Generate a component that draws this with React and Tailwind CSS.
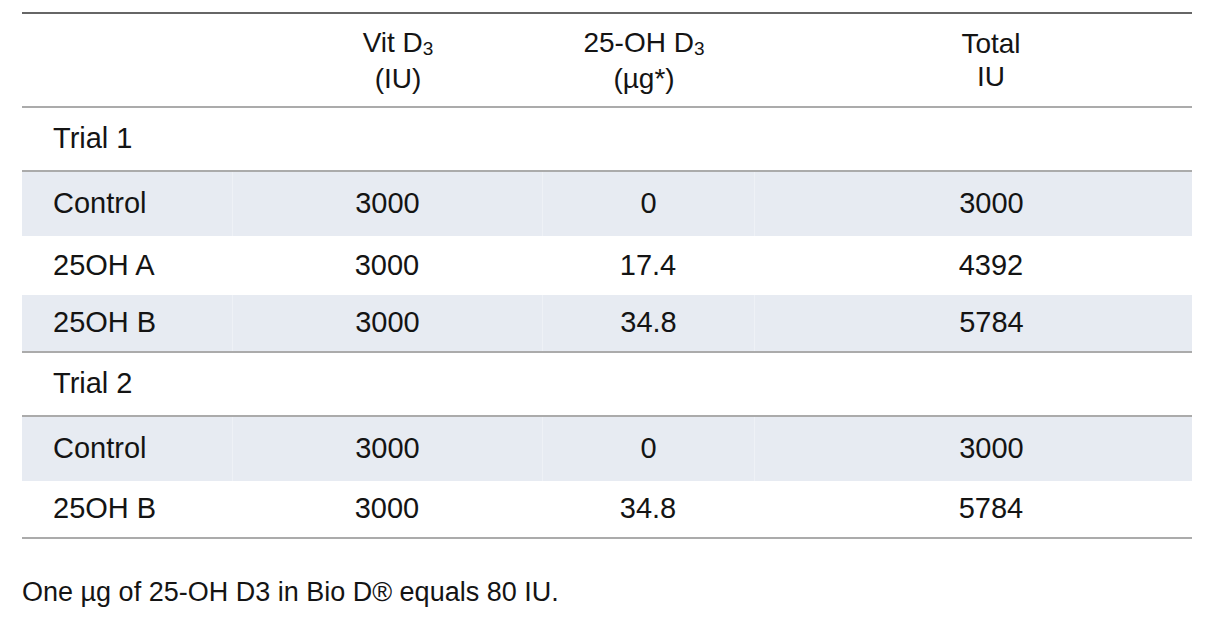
const rows = [
  { type: 'group', label: 'Trial 1', h: 'h-[64px]' },
  { label: 'Control', vit: '3000', oh: '0', total: '3000', shade: true, h: 'h-[64px]' },
  { label: '25OH A', vit: '3000', oh: '17.4', total: '4392', h: 'h-[59px]' },
  { label: '25OH B', vit: '3000', oh: '34.8', total: '5784', shade: true, h: 'h-[58px]' },
  { type: 'group', label: 'Trial 2', h: 'h-[64px]' },
  { label: 'Control', vit: '3000', oh: '0', total: '3000', shade: true, h: 'h-[64px]' },
  { label: '25OH B', vit: '3000', oh: '34.8', total: '5784', h: 'h-[58px]' },
];

const cols = 'grid grid-cols-[210px_310px_212px_438px]';

function Sub({ children }) {
  return <span className="text-[19px] relative top-[3px]">{children}</span>;
}

export default function App() {
  return (
    <div
      className="w-[1206px] h-[632px] bg-white text-[#141414] pt-[12px] pl-[22px]"
      style={{ fontFamily: '"Liberation Sans", Arial, sans-serif' }}
    >
      <div className="w-[1170px]">
        {/* Header */}
        <div className={`${cols} border-t-2 border-[#666666] border-b-2 border-b-[#ababab] h-[96px] items-center text-[28px] leading-[33px]`}>
          <div />
          <div className="text-center pl-[22px]">
            <div>Vit D<Sub>3</Sub></div>
            <div>(IU)</div>
          </div>
          <div className="text-center pr-[8px]">
            <div>25-OH D<Sub>3</Sub></div>
            <div>(µg*)</div>
          </div>
          <div className="text-center pl-[36px]">
            <div>Total</div>
            <div>IU</div>
          </div>
        </div>

        {/* Body */}
        {rows.map((r, i) => {
          const last = i === rows.length - 1;
          const nextGroup = rows[i + 1] && rows[i + 1].type === 'group';
          const border = r.type === 'group' || nextGroup || last ? 'border-b-2 border-[#ababab]' : '';
          if (r.type === 'group') {
            return (
              <div key={i} className={`${cols} ${r.h} ${border} items-center text-[29px]`}>
                <div className="pl-[31px]">{r.label}</div>
              </div>
            );
          }
          return (
            <div
              key={i}
              className={`${cols} ${r.h} ${border} text-[29px] ${r.shade ? 'bg-[#e7ebf2]' : 'bg-white'}`}
            >
              <div className="pl-[31px] flex items-center">{r.label}</div>
              <div className={`flex items-center justify-center ${r.shade ? 'border-l border-[#eef1f6]' : ''}`}>{r.vit}</div>
              <div className={`flex items-center justify-center ${r.shade ? 'border-l border-[#eef1f6]' : ''}`}>{r.oh}</div>
              <div className={`flex items-center justify-center pl-[36px] ${r.shade ? 'border-l border-[#eef1f6]' : ''}`}>{r.total}</div>
            </div>
          );
        })}

        <p className="mt-[37px] text-[27px] leading-[32px]">One µg of 25-OH D3 in Bio D® equals 80 IU.</p>
      </div>
    </div>
  );
}
